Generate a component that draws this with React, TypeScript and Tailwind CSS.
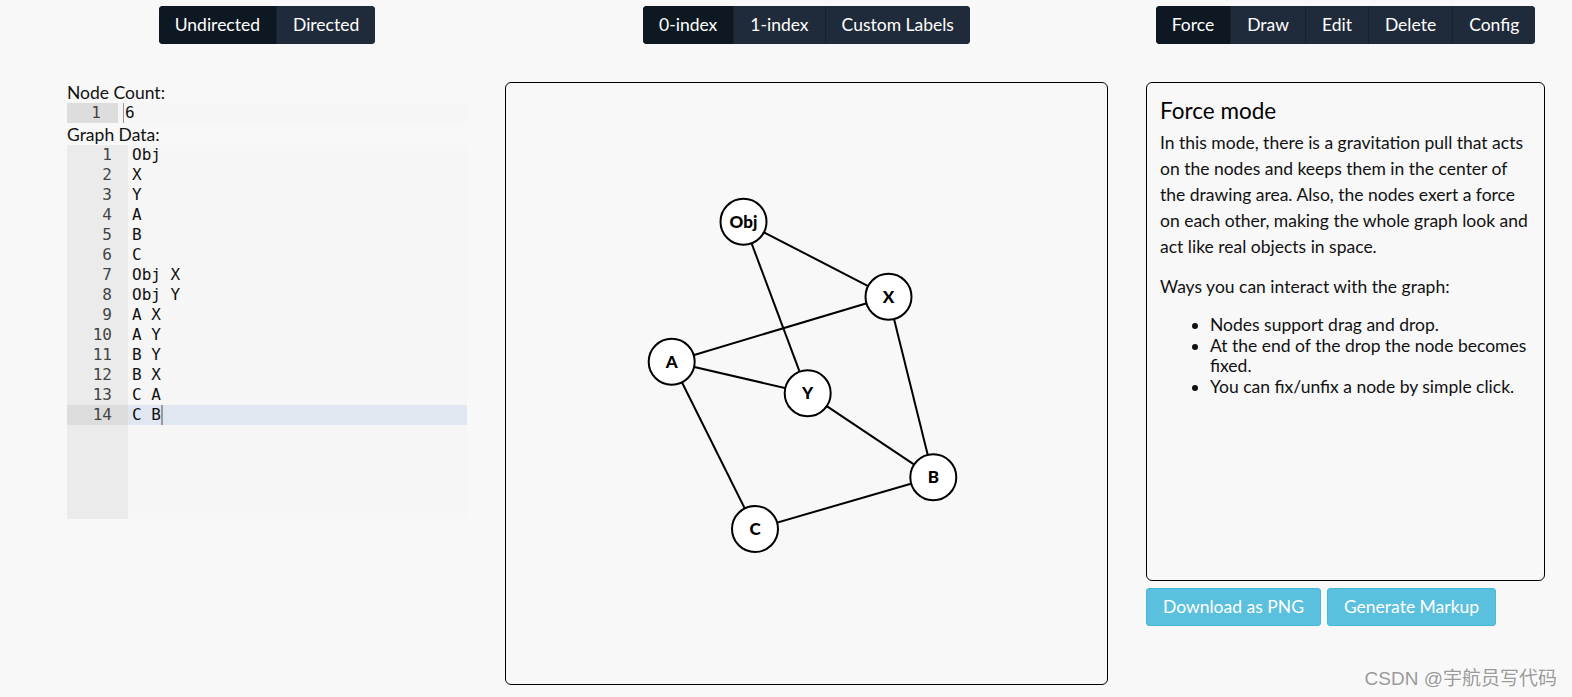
import React from "react";

const lines = ["Obj", "X", "Y", "A", "B", "C", "Obj X", "Obj Y", "A X", "A Y", "B Y", "B X", "C A", "C B"];

const nodes: Record<string, [number, number]> = {
  Obj: [238.5, 139.7],
  X: [383.5, 214.7],
  A: [166.7, 279.7],
  Y: [302.7, 311.3],
  B: [428.3, 395.3],
  C: [250, 447],
};

const edges: [string, string][] = [
  ["Obj", "X"],
  ["Obj", "Y"],
  ["A", "X"],
  ["A", "Y"],
  ["B", "Y"],
  ["B", "X"],
  ["C", "A"],
  ["C", "B"],
];

function Group({ items }: { items: string[] }) {
  return (
    <div className="flex justify-center">
      <div className="flex rounded-[4px] overflow-hidden bg-[#1f2a3a]">
        {items.map((t, i) => (
          <div
            key={t}
            className={
              i === 0
                ? "h-[38px] px-4 flex items-center text-[17.5px] text-white bg-[#0d1822]"
                : "h-[38px] px-4 flex items-center text-[17.5px] text-white bg-[#1f2a3a] border-l border-[#18212e]"
            }
          >
            {t}
          </div>
        ))}
      </div>
    </div>
  );
}

export default function App() {
  const mono = { fontFamily: '"DejaVu Sans Mono", monospace' };
  return (
    <div
      className="relative min-h-[697px] bg-[#f8f8f8] text-[#111] pl-[67px] pt-[6px] flex gap-[38px]"
      style={{ fontFamily: "Lato, sans-serif" }}
    >
      {/* Left column */}
      <div className="w-[400px] flex flex-col">
        <Group items={["Undirected", "Directed"]} />
        <div className="mt-[38px] flex flex-col">
          <div className="h-[21px] text-[17.5px] leading-[21px]">Node Count:</div>
          <div className="flex h-[20px] bg-[#f6f6f6]" style={mono}>
            <div className="w-[51px] bg-[#dddddd] text-right pr-[17px] text-[16px] leading-[20px] text-[#444]">1</div>
            <div className="flex items-center pl-[5px]">
              <span className="w-[1px] h-[20px] bg-[#9a9a9a]" />
              <span className="text-[16px] leading-[20px] pl-[1px]">6</span>
            </div>
          </div>
          <div className="h-[21px] text-[17.5px] leading-[21px] mt-[1px]">Graph Data:</div>
          <div className="flex h-[374px] bg-[#f6f6f6]" style={mono}>
            <div className="w-[61px] bg-[#ebebeb] flex flex-col">
              {lines.map((_, i) => (
                <div
                  key={i}
                  className={
                    i === 13
                      ? "h-[20px] text-right pr-[16px] text-[16px] leading-[20px] text-[#444] bg-[#dcdcdc]"
                      : "h-[20px] text-right pr-[16px] text-[16px] leading-[20px] text-[#444]"
                  }
                >
                  {i + 1}
                </div>
              ))}
            </div>
            <div className="flex-1 flex flex-col">
              {lines.map((l, i) => (
                <div
                  key={i}
                  className={
                    i === 13
                      ? "h-[20px] pl-[4px] text-[16px] leading-[20px] whitespace-pre bg-[#e0e7f1] flex items-center"
                      : "h-[20px] pl-[4px] text-[16px] leading-[20px] whitespace-pre"
                  }
                >
                  {l}
                  {i === 13 && <span className="w-[2px] h-[20px] bg-[#9a9a9a]" />}
                </div>
              ))}
            </div>
          </div>
        </div>
      </div>

      {/* Center column */}
      <div className="w-[603px] flex flex-col">
        <Group items={["0-index", "1-index", "Custom Labels"]} />
        <div className="mt-[38px] w-[603px] h-[603px] border border-black rounded-[6px] overflow-hidden">
          <svg width="601" height="601" viewBox="1 1 601 601">
            {edges.map(([a, b]) => (
              <line
                key={a + b}
                x1={nodes[a][0]}
                y1={nodes[a][1]}
                x2={nodes[b][0]}
                y2={nodes[b][1]}
                stroke="#000"
                strokeWidth={2}
              />
            ))}
            {Object.entries(nodes).map(([k, [x, y]]) => (
              <g key={k}>
                <circle cx={x} cy={y} r={23} fill="#fff" stroke="#000" strokeWidth={2} />
                <text
                  x={x}
                  y={y + 6}
                  textAnchor="middle"
                  fontFamily="Lato, sans-serif"
                  fontWeight={900}
                  fontSize={17}
                  fill="#000"
                >
                  {k}
                </text>
              </g>
            ))}
          </svg>
        </div>
      </div>

      {/* Right column */}
      <div className="w-[399px] flex flex-col">
        <Group items={["Force", "Draw", "Edit", "Delete", "Config"]} />
        <div className="mt-[38px] h-[499px] border border-black rounded-[6px] px-[13px] pt-[14px]">
          <div className="text-[22.5px] leading-[28px] text-black">Force mode</div>
          <p className="text-[17.5px] leading-[26px] mt-[5px]">
            In this mode, there is a gravitation pull that acts on the nodes and keeps them in the center of the drawing
            area. Also, the nodes exert a force on each other, making the whole graph look and act like real objects in
            space.
          </p>
          <p className="text-[17.5px] leading-[26px] mt-[14px]">Ways you can interact with the graph:</p>
          <ul className="list-disc pl-[50px] mt-[15px] text-[17.5px] leading-[20.5px]">
            <li>Nodes support drag and drop.</li>
            <li>At the end of the drop the node becomes fixed.</li>
            <li>You can fix/unfix a node by simple click.</li>
          </ul>
        </div>
        <div className="mt-[7px] flex gap-[6px]">
          <div className="h-[38px] px-4 flex items-center text-[17.5px] text-white bg-[#5bc0de] border border-[#46b8da] rounded-[3px]">
            Download as PNG
          </div>
          <div className="h-[38px] px-4 flex items-center text-[17.5px] text-white bg-[#5bc0de] border border-[#46b8da] rounded-[3px]">
            Generate Markup
          </div>
        </div>
      </div>

      <div
        className="absolute right-[15px] bottom-[6px] text-[19px] leading-[24px] text-[#9a9a9a]"
        style={{ fontFamily: '"Liberation Sans", "Noto Sans CJK SC", sans-serif', textShadow: "1px 1px 1px #fff" }}
      >
        CSDN @宇航员写代码
      </div>
    </div>
  );
}
